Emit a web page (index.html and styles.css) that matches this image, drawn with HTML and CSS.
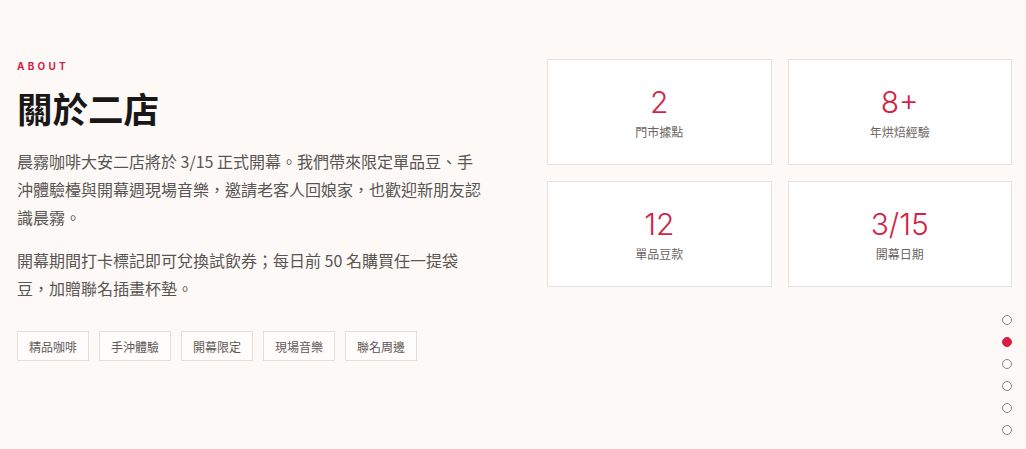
FILE: index.html
```html
<!DOCTYPE html>
<html lang="zh-Hant">
<head>
<meta charset="utf-8">
<link rel="stylesheet" href="styles.css">
</head>
<body>
<main class="section">
  <div class="about">
    <div class="eyebrow">ABOUT</div>
    <h1 class="title">關於二店</h1>
    <p class="text">晨霧咖啡大安二店將於 3/15 正式開幕。我們帶來限定單品豆、手沖體驗檯與開幕週現場音樂，邀請老客人回娘家，也歡迎新朋友認識晨霧。</p>
    <p class="text">開幕期間打卡標記即可兌換試飲券；每日前 50 名購買任一提袋豆，加贈聯名插畫杯墊。</p>
    <ul class="tags">
      <li class="tag">精品咖啡</li>
      <li class="tag">手沖體驗</li>
      <li class="tag">開幕限定</li>
      <li class="tag">現場音樂</li>
      <li class="tag">聯名周邊</li>
    </ul>
  </div>
  <div class="stats">
    <div class="card"><div class="num">2</div><div class="label">門市據點</div></div>
    <div class="card"><div class="num">8+</div><div class="label">年烘焙經驗</div></div>
    <div class="card"><div class="num">12</div><div class="label">單品豆款</div></div>
    <div class="card"><div class="num">3/15</div><div class="label">開幕日期</div></div>
  </div>
</main>
<nav class="dots">
  <span class="dot"></span>
  <span class="dot active"></span>
  <span class="dot"></span>
  <span class="dot"></span>
  <span class="dot"></span>
  <span class="dot"></span>
</nav>
</body>
</html>
```
FILE: styles.css
```css
* { box-sizing: border-box; }
html, body { margin: 0; padding: 0; }
body {
  background: #fdf9f7;
  font-family: "Noto Sans CJK TC", "Noto Sans", sans-serif;
  color: #1c1a19;
  width: 1026px;
  height: 449px;
  overflow: hidden;
}
.section {
  display: grid;
  grid-template-columns: 465px 465px;
  column-gap: 65px;
  padding: 59px 15px 0 17px;
  align-items: start;
}
.eyebrow {
  margin-top: -1px;
  font-family: "Inter", "Noto Sans", sans-serif;
  font-size: 10px;
  font-weight: 700;
  letter-spacing: 3.2px;
  line-height: 16px;
  color: #d41f47;
}
.title {
  margin: 12px 0 0;
  font-size: 35.5px;
  font-weight: 700;
  line-height: 44px;
  color: #1a1817;
}
.text {
  margin: 17px 0 0;
  width: 468px;
  font-size: 16px;
  line-height: 28px;
  color: #5a5552;
}
.text + .text { margin-top: 15px; }
.tags {
  list-style: none;
  margin: 29px 0 0;
  padding: 0;
  display: flex;
  gap: 10px;
}
.tag {
  height: 30px;
  padding: 0 11px;
  display: flex;
  align-items: center;
  border: 1px solid #e3dfdd;
  background: #fffdfc;
  font-size: 12px;
  color: #5d5856;
}
.stats {
  display: grid;
  grid-template-columns: 1fr 1fr;
  gap: 16px;
}
.card {
  height: 106px;
  background: #fff;
  border: 1px solid #e6e2e0;
  display: flex;
  flex-direction: column;
  align-items: center;
  justify-content: center;
}
.num {
  font-family: "Inter", "Noto Sans", sans-serif;
  font-weight: 300;
  font-size: 30px;
  line-height: 36px;
  color: #d41f47;
}
.label {
  margin-top: 3px;
  font-size: 12px;
  line-height: 18px;
  color: #6a6562;
}
.dots {
  position: absolute;
  left: 1002px;
  top: 315px;
  display: flex;
  flex-direction: column;
  gap: 12px;
}
.dot {
  width: 10px;
  height: 10px;
  border-radius: 50%;
  border: 1px solid #8a8583;
}
.dot.active {
  background: #d81e45;
  border-color: #d81e45;
}
```
